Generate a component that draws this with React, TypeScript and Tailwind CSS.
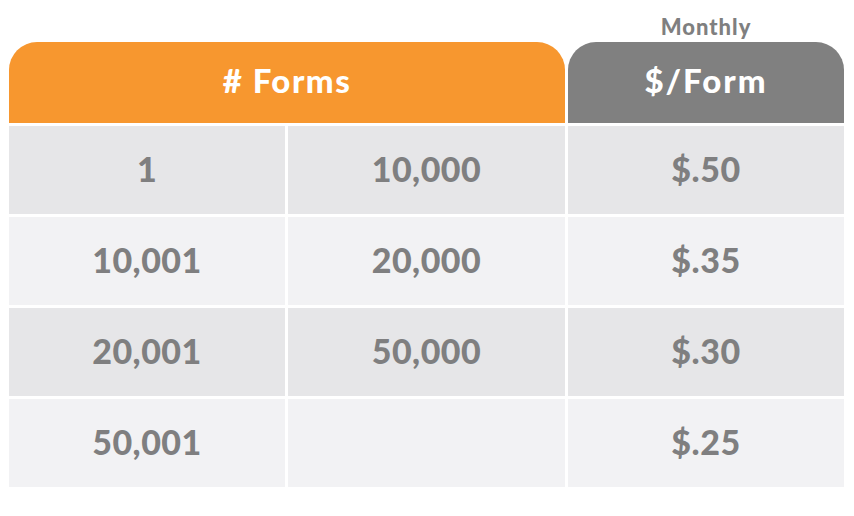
import React from 'react';

const rows = [
  { from: '1', to: '10,000', price: '$.50' },
  { from: '10,001', to: '20,000', price: '$.35' },
  { from: '20,001', to: '50,000', price: '$.30' },
  { from: '50,001', to: '', price: '$.25' },
];

const cell = 'flex items-center justify-center pb-[3px] text-[34px] font-black text-[#7f7f80] tracking-[0.5px]';

export default function App() {
  return (
    <div className="w-[854px] h-[516px] bg-white pl-[9px] pt-[11px]" style={{ fontFamily: 'Lato, "Open Sans", sans-serif' }}>
      <div className="grid grid-cols-[276px_277px_276px] gap-x-[3px]">
        <div className="col-start-3 h-[31px] flex items-start justify-center text-[22px] font-black leading-[31px] tracking-[1px] text-[#7f7f80]">
          Monthly
        </div>
      </div>
      <div className="grid grid-cols-[276px_277px_276px] gap-x-[3px] gap-y-[3px]">
        <div className="col-span-2 h-[81px] pb-[3px] rounded-t-[28px] bg-[#f7972f] flex items-center justify-center text-[33px] font-black text-white tracking-[1.5px]">
          # Forms
        </div>
        <div className="h-[81px] pb-[3px] rounded-t-[28px] bg-[#808080] flex items-center justify-center text-[33px] font-black text-white tracking-[2px]">
          $/Form
        </div>
        {rows.map((r, i) => {
          const bg = i % 2 === 0 ? 'bg-[#e6e6e8]' : 'bg-[#f2f2f4]';
          return (
            <React.Fragment key={i}>
              <div className={`${cell} ${bg} h-[88px]`}>{r.from}</div>
              <div className={`${cell} ${bg} h-[88px]`}>{r.to}</div>
              <div className={`${cell} ${bg} h-[88px]`}>{r.price}</div>
            </React.Fragment>
          );
        })}
      </div>
    </div>
  );
}
